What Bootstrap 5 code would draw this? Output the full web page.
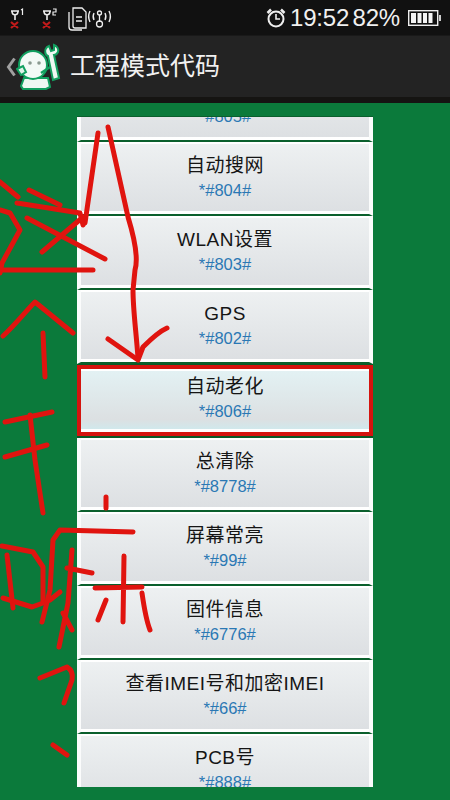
<!DOCTYPE html>
<html lang="zh"><head><meta charset="utf-8"><title>工程模式代码</title>
<link href="https://cdn.jsdelivr.net/npm/bootstrap@5.3.0/dist/css/bootstrap.min.css" rel="stylesheet">
<style>
html,body{height:800px;overflow:hidden}
body{font-family:"Liberation Sans","Noto Sans CJK SC",sans-serif;background:#0b7a3b}
.phone{width:450px;height:800px;position:relative;overflow:hidden;display:flex;flex-direction:column}
.statusbar{height:35px;flex:none;background:#111;color:#f0f0f0;padding:0 8px 0 6px}
.clock{font-size:24px;line-height:35px;letter-spacing:-.2px;word-spacing:-3px;white-space:nowrap}
.appbar{height:68px;flex:none;background:#232323;border-bottom:6px solid #151412;border-top:1px solid #191919;padding-left:6px}
.apptitle{font-size:25px;color:#f1f1f1;line-height:1;margin-left:6px;white-space:nowrap}
.listwrap{width:296px;height:671px;margin:13px 0 0 77px;overflow:hidden;border-top:1px solid #0a5f2c;flex:none}
.codelist{margin-top:-49px;border-radius:0;background:transparent}
.coderow{height:74px;padding:0;border:0;border-radius:0;flex:none;text-align:center;background:linear-gradient(180deg,#eef1f2,#dcdfe2);
 border-left:4px solid #fbfcfc;border-right:4px solid #fbfcfc;border-bottom:2px solid #0a5f2c;box-shadow:inset 0 2px 0 #fff,inset 0 -3px 0 #fff;color:#151515}
.codelist .coderow+.coderow{border-top:0}
.codelist .coderow.flagged{border:4px solid #d4140e;box-shadow:0 2px 0 #0a5a27,0 -1px 0 #0a5a27,inset 0 2px 0 #fff,inset 0 -3px 0 #fff;height:71px;margin:1px 0 2px;background:linear-gradient(180deg,#e3f2f4,#dce0e2 80%,#cdebef)}
.rowname{font-size:19px;line-height:24px;padding-top:12px;letter-spacing:.5px;white-space:nowrap;height:36px}
.flagged .rowname{padding-top:6px;height:30px}
.rowcode{font-size:16.5px;line-height:23px;margin-top:1px;color:#2a78b4}
.scribble{position:absolute;left:0;top:0;width:450px;height:800px;pointer-events:none}
.scribble path{fill:none;stroke:#e0140f;stroke-width:5;stroke-linecap:round;stroke-linejoin:round}
</style></head>
<body>
<div class="phone">
 <div class="statusbar d-flex align-items-center">
  <svg width="112" height="32" viewBox="0 0 112 32" fill="none">
   <g stroke="#eee" stroke-width="1.600">
    <path d="M5 9h8M6 9c0 5 6 5 6 0M9 13v5"/><path d="M37 9h8M38 9c0 5 6 5 6 0M41 13v5"/>
    <path d="M15 8l1.500-1v6" stroke-width="1.200"/><path d="M47 7h3v3h-3v3h3" stroke-width="1.200"/>
    <path d="M67 6h9l4 4v16H69a2 2 0 0 1-2-2zM63 10v15a3 3 0 0 0 3 3h10M70 15h6M70 19h6" stroke-width="1.300"/>
    <path d="M84 9c-2 4-2 7 0 11M88 11c-1 2-1 5 0 7M103 9c2 4 2 7 0 11M99 11c1 2 1 5 0 7" stroke-width="1.400"/>
    <circle cx="93.500" cy="11" r="2" stroke-width="1.300"/><path d="M93.500 13v7" stroke-width="1.300"/><circle cx="93.500" cy="22" r="3" stroke-width="1.300"/>
   </g>
   <path d="M5 20l7 6M12 20l-7 6M37 20l7 6M44 20l-7 6" stroke="#c01a1a" stroke-width="2.200"/>
  </svg>
  <div class="ms-auto d-flex align-items-center gap-1">
   <svg width="20" height="20" viewBox="0 0 20 20" fill="none" stroke="#eee" stroke-width="2"><circle cx="10" cy="11" r="7.500"/><path d="M10 6v5h4" stroke-width="1.600"/><path d="M1.500 5 5 1.500M18.500 5 15 1.500" stroke-width="2.500"/></svg>
   <span class="clock">19:52 82%</span>
   <svg width="34" height="18" viewBox="0 0 34 18" class="ms-1"><rect x=".7" y="1.700" width="29" height="14.600" fill="none" stroke="#eee" stroke-width="1.400"/><path d="M3 4h5v10H3zM9.500 4h4v10h-4zM15 4h4v10h-4zM20.500 4h4v10h-4z" fill="#f4f4f4"/><rect x="31" y="6" width="2" height="6" fill="#ccc"/></svg>
  </div>
 </div>
 <div class="appbar d-flex align-items-center">
  <svg width="10" height="20" viewBox="0 0 10 20" fill="none"><path d="M8.500 1.500 2.500 10l6 8.500" stroke="#a0a0a0" stroke-width="3"/></svg>
  <svg width="48" height="48" viewBox="0 0 48 48" fill="none">
   <rect x="0" y="0" width="48" height="48" fill="#232323"/>
   <path d="M33 3l2 5 3-1 0-5c3 1 5 4 4 7-1 2-2 3-4 3l5 23-6 2-5-24c-3-1-4-6-1-9z" fill="#eef8f2" stroke="#12a060" stroke-width="2"/>
   <path d="M8 35h24l2 9-4 2H7l-2-3z" fill="#eef8f2" stroke="#12a060" stroke-width="2"/>
   <circle cx="17" cy="22" r="14" fill="#f3faf6" stroke="#12a060" stroke-width="2"/>
   <path d="M1 26l6-3 3 6-5 3z" fill="#dff2e8" stroke="#12a060" stroke-width="2"/>
   <circle cx="14" cy="20" r="1.800" fill="#8a9a90"/><circle cx="23" cy="20" r="1.800" fill="#8a9a90"/>
   <path d="M25 30l9-6" stroke="#12a060" stroke-width="2.500"/>
  </svg>
  <span class="apptitle">工程模式代码</span>
 </div>
 <div class="listwrap">
  <div class="list-group codelist">
   <div class="list-group-item coderow"><div class="rowname"></div><div class="rowcode">*#805#</div></div>
   <div class="list-group-item coderow"><div class="rowname">自动搜网</div><div class="rowcode">*#804#</div></div>
   <div class="list-group-item coderow"><div class="rowname">WLAN设置</div><div class="rowcode">*#803#</div></div>
   <div class="list-group-item coderow"><div class="rowname">GPS</div><div class="rowcode">*#802#</div></div>
   <div class="list-group-item coderow flagged"><div class="rowname">自动老化</div><div class="rowcode">*#806#</div></div>
   <div class="list-group-item coderow"><div class="rowname">总清除</div><div class="rowcode">*#8778#</div></div>
   <div class="list-group-item coderow"><div class="rowname">屏幕常亮</div><div class="rowcode">*#99#</div></div>
   <div class="list-group-item coderow"><div class="rowname">固件信息</div><div class="rowcode">*#6776#</div></div>
   <div class="list-group-item coderow"><div class="rowname">查看IMEI号和加密IMEI</div><div class="rowcode">*#66#</div></div>
   <div class="list-group-item coderow"><div class="rowname">PCB号</div><div class="rowcode">*#888#</div></div>
  </div>
 </div>
 <svg class="scribble" viewBox="0 0 450 800" aria-hidden="true">
  <path d="M98 133 85 223"/>
  <path d="M108 127 128 217C135 240 138 260 135 270L133 290C133 310 136 330 138 358"/>
  <path d="M108 339 138 360 143 347C150 340 158 332 167 328"/>
  <path d="M0 182 18 197M29 190 60 205M17 203 80 213 83 225M83 217 42 252M27 218 105 259M0 210 10 213 20 230 2 263 0 273M0 270H93"/>
  <path d="M3 336C15 325 25 312 35 302L73 333M43 333 45 377"/>
  <path d="M5 422 52 412M5 457 47 445M30 415 35 460 43 513"/>
  <path d="M2 546 33 552 43 567 43 603 32 607 3 598M7 555 13 608"/>
  <path d="M133 532 60 530 53 540 50 590 42 622M72 550 68 603 59 647M63 613 72 630M50 600 60 592M67 568 92 573"/>
  <path d="M124 556 123 622M95 588 142 587M106 600 98 620M142 593C144 607 146 620 150 630M106 497V508"/>
  <path d="M40 678 67 667C72 670 73 675 72 680L64 703M53 745 67 755"/>
 </svg>
</div>
<script src="https://cdn.jsdelivr.net/npm/bootstrap@5.3.0/dist/js/bootstrap.bundle.min.js"></script>
</body></html>
